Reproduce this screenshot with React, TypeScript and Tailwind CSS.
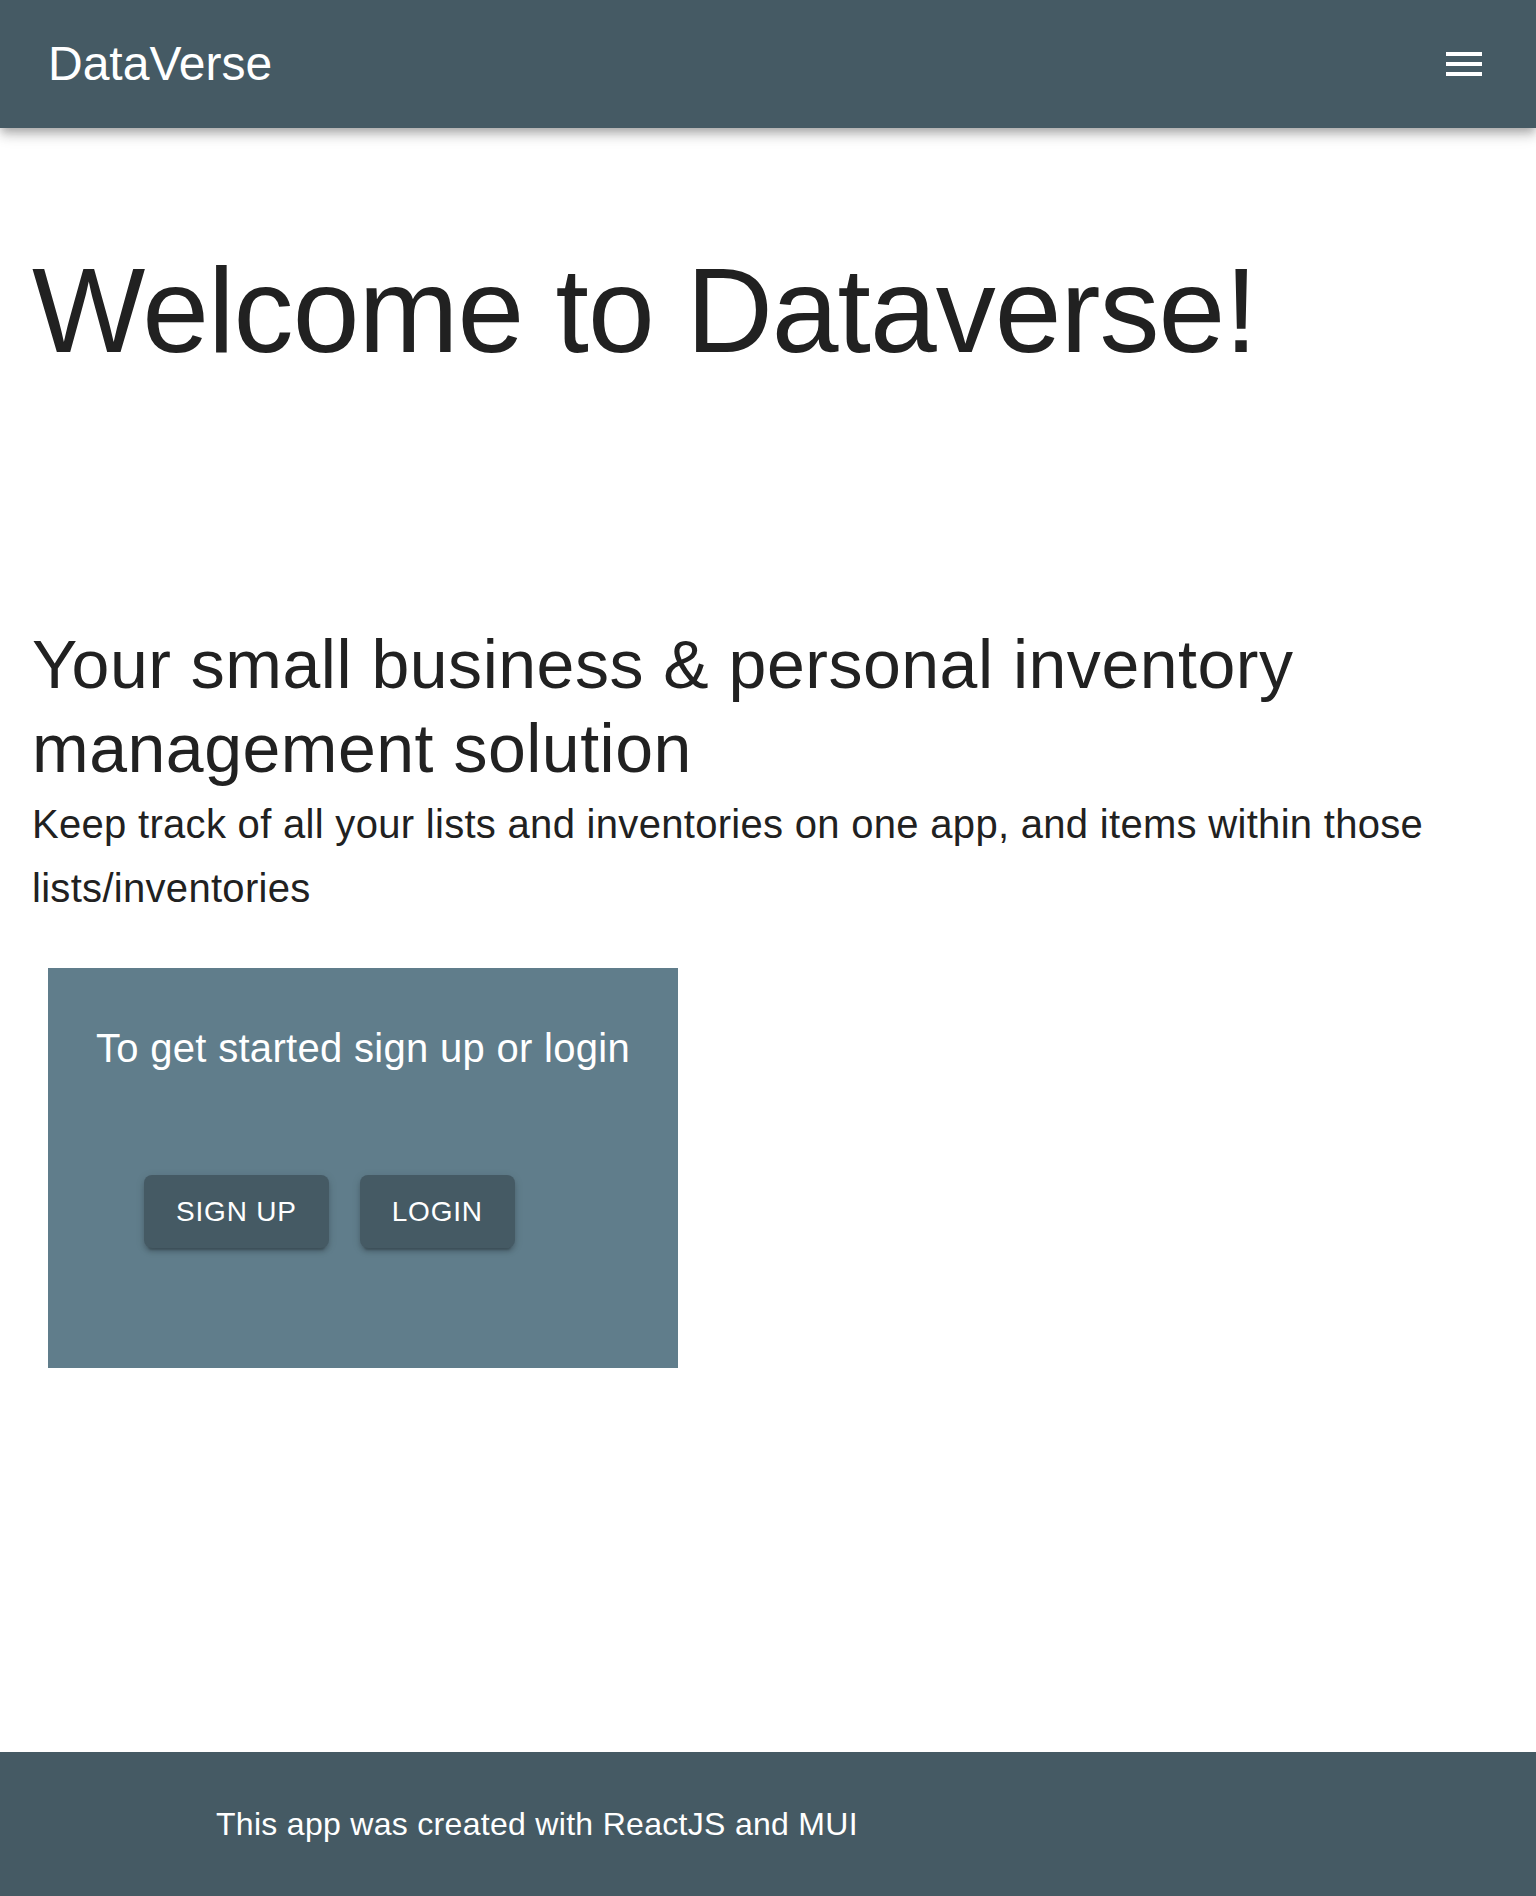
export default function App() {
  return (
    <div className="min-h-screen flex flex-col bg-white font-['Liberation_Sans',Arial,sans-serif] text-[#212121]">
      <header className="h-[128px] bg-[#455a64] flex items-center justify-between px-[48px] shadow-[0_4px_8px_-2px_rgba(0,0,0,0.2),0_8px_10px_0_rgba(0,0,0,0.14),0_2px_20px_0_rgba(0,0,0,0.12)] relative z-10">
        <span className="text-[48px] leading-[64px] text-white">DataVerse</span>
        <button aria-label="menu" className="w-[48px] h-[48px] flex items-center justify-center text-white">
          <svg viewBox="0 0 24 24" className="w-[48px] h-[48px]" fill="currentColor">
            <path d="M3 18h18v-2H3zm0-5h18v-2H3zm0-7v2h18V6z" />
          </svg>
        </button>
      </header>

      <main className="flex-1 px-[32px]">
        <h1 className="mt-[110px] text-[120px] leading-[144px] tracking-[-0.008em]">
          Welcome to Dataverse!
        </h1>

        <h2 className="mt-[240px] text-[68px] leading-[84px] tracking-[0.0075em]">
          Your small business &amp; personal inventory management solution
        </h2>
        <p className="pt-[2px] text-[40px] leading-[64px] tracking-[0.0075em]">
          Keep track of all your lists and inventories on one app, and items within those lists/inventories
        </p>

        <div className="mt-[48px] ml-[16px] w-[630px] h-[400px] bg-[#607d8b] pt-[48px]">
          <p className="text-center text-white text-[40px] leading-[64px] tracking-[0.0075em]">
            To get started sign up or login
          </p>
          <div className="mt-[95px] pl-[96px] flex gap-[31px]">
            <button className="h-[73px] px-[32px] rounded-[8px] bg-[#455a64] text-white text-[28px] leading-[49px] tracking-[0.02857em] uppercase shadow-[0_6px_2px_-4px_rgba(0,0,0,0.2),0_4px_4px_0_rgba(0,0,0,0.14),0_2px_10px_0_rgba(0,0,0,0.12)]">
              Sign up
            </button>
            <button className="h-[73px] px-[32px] rounded-[8px] bg-[#455a64] text-white text-[28px] leading-[49px] tracking-[0.02857em] uppercase shadow-[0_6px_2px_-4px_rgba(0,0,0,0.2),0_4px_4px_0_rgba(0,0,0,0.14),0_2px_10px_0_rgba(0,0,0,0.12)]">
              Login
            </button>
          </div>
        </div>
      </main>

      <footer className="h-[144px] bg-[#455a64] flex items-center pl-[216px]">
        <p className="text-white text-[32px] leading-[48px] tracking-[0.00938em]">
          This app was created with ReactJS and MUI
        </p>
      </footer>
    </div>
  );
}
